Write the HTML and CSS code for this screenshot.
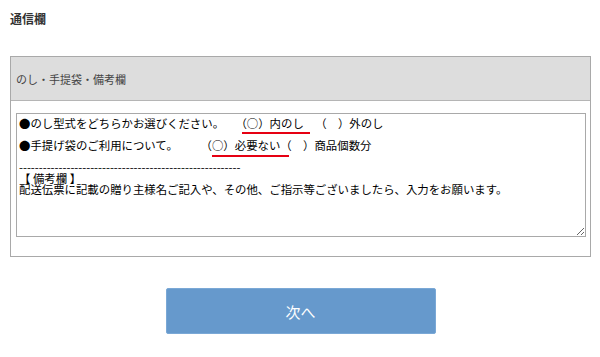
FILE: index.html
```html
<!DOCTYPE HTML>
<html>
  <head>
    <meta charset='utf-8'>
    <link rel="stylesheet" href="styles.css">
  </head>
  <body>
    <h2 class = 'page_title'>通信欄</h2>
    <div class = 'msg_box'>
      <div class = 'msg_head'>のし・手提袋・備考欄</div>
      <div class = 'msg_body'>
        <div class = 'area_wrap'>
          <textarea class = 'msg_area' name = 'message'>●のし型式をどちらかお選びください。　（○）内のし　（　）外のし

●手提げ袋のご利用について。　　（○）必要ない（　）商品個数分

--------------------------------------------------------
【 備考欄 】
配送伝票に記載の贈り主様名ご記入や、その他、ご指示等ございましたら、入力をお願います。</textarea>
          <span class = 'mark mark_noshi'></span>
          <span class = 'mark mark_bag'></span>
        </div>
      </div>
    </div>
    <div class = 'btn_row'>
      <input type = 'button' class = 'next_btn' value = '次へ'>
    </div>
  </body>
</html>
```

FILE: styles.css
```css
body {
  margin: 0;
  padding: 0 9px 0 10px;
  font-family: "Noto Sans CJK JP", "Noto Sans", sans-serif;
  color: #333;
  background: #fff;
}
.page_title {
  margin: 0;
  padding-top: 11px;
  height: 56px;
  box-sizing: border-box;
  font-size: 12px;
  font-weight: bold;
  line-height: 16px;
  color: #333;
}
.msg_box {
  border: 1px solid #a9a9a9;
}
.msg_head {
  height: 43px;
  padding-left: 5px;
  background: #dddddd;
  border-bottom: 1px solid #b5b5b5;
  font-size: 11px;
  line-height: 44px;
  color: #444;
}
.msg_body {
  padding: 12px 4px 19px 5px;
}
.area_wrap {
  position: relative;
}
.msg_area {
  display: block;
  width: 100%;
  height: 124px;
  box-sizing: border-box;
  margin: 0;
  padding: 4px 2px;
  border: 1px solid #a9a9a9;
  font-family: "Noto Sans CJK JP", sans-serif;
  font-size: 11.4px;
  line-height: 11px;
  color: #000;
  text-spacing-trim: space-all;
  resize: both;
}
.mark {
  position: absolute;
  height: 2px;
  background: #e60012;
}
.mark_noshi {
  left: 226px;
  top: 19px;
  width: 68px;
}
.mark_bag {
  left: 196px;
  top: 42px;
  width: 77px;
}
.btn_row {
  display: flex;
  justify-content: center;
  padding-top: 31px;
}
.next_btn {
  width: 270px;
  height: 46px;
  border: 1px solid #7aa8d6;
  border-radius: 2px;
  background: #6699cc;
  color: #fff;
  font-family: "Noto Sans CJK JP", sans-serif;
  font-size: 15px;
}
```
